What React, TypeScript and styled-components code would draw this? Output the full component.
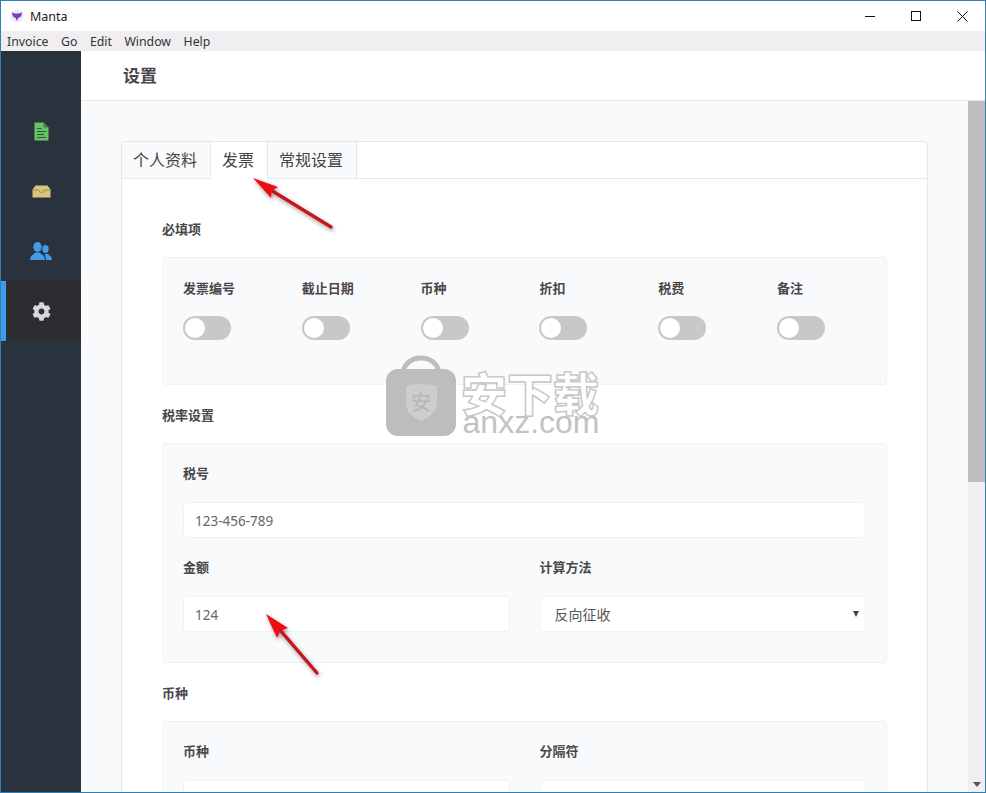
import React from 'react'
import styled, { createGlobalStyle } from 'styled-components'
import { FaCog } from 'react-icons/fa'

const uiFont = `'Noto Sans', 'Noto Sans CJK SC', sans-serif`

const GlobalStyle = createGlobalStyle`
  html, body {
    margin: 0;
    padding: 0;
    height: 100%;
    overflow: hidden;
    background: #fff;
  }
  * {
    box-sizing: border-box;
  }
`

const Window = styled.div`
  position: relative;
  width: 986px;
  height: 793px;
  display: flex;
  flex-direction: column;
  overflow: hidden;
  border: 1px solid #2f7fb5;
  font-family: ${uiFont};
  color: #4a474b;
`

const TitleBar = styled.div`
  height: 30px;
  flex: none;
  display: flex;
  align-items: center;
  padding-left: 9px;
  background: #fff;
  color: #222;
  font-size: 12.5px;
`

const TitleText = styled.span`
  margin-left: 6px;
`

const WindowButtons = styled.div`
  margin-left: auto;
  display: flex;
  height: 100%;
`

const WindowButton = styled.div`
  width: 46px;
  height: 100%;
  display: flex;
  align-items: center;
  justify-content: center;
`

const MenuBar = styled.div`
  height: 20px;
  flex: none;
  display: flex;
  align-items: center;
  gap: 12.5px;
  padding-left: 6px;
  background: #f0eef1;
  color: #333;
  font-size: 12.3px;
`

const Body = styled.div`
  flex: 1;
  display: flex;
  min-height: 0;
`

const Sidebar = styled.nav`
  width: 80px;
  flex: none;
  padding-top: 50px;
  background: #2a323d;
`

const NavItem = styled.div<{ $active?: boolean }>`
  height: 60px;
  display: flex;
  align-items: center;
  justify-content: center;
  background: ${p => (p.$active ? '#2c2d31' : 'transparent')};
  border-left: 5px solid ${p => (p.$active ? '#3f9cea' : 'transparent')};
  padding-right: 5px;
  color: #d8d8da;
  font-size: 19px;
`

const Main = styled.div`
  flex: 1;
  min-width: 0;
  display: flex;
  flex-direction: column;
`

const PageHeader = styled.header`
  height: 50px;
  flex: none;
  display: flex;
  align-items: center;
  padding-left: 42px;
  padding-bottom: 2px;
  background: #fff;
  border-bottom: 1px solid #e6e7ea;
  font-size: 17px;
  font-weight: 700;
`

const ScrollArea = styled.div`
  flex: 1;
  min-height: 0;
  display: flex;
`

const Content = styled.main`
  flex: 1;
  min-width: 0;
  overflow: hidden;
  padding: 40px 40px 0;
  background: #f9fafc;
`

const Scrollbar = styled.div`
  width: 17px;
  flex: none;
  display: flex;
  flex-direction: column;
  background: #f0eef1;
`

const ScrollThumb = styled.div`
  height: 381px;
  background: #bfbdc0;
`

const ScrollArrow = styled.div`
  margin-top: auto;
  height: 16px;
  display: flex;
  align-items: center;
  justify-content: center;
`

const Card = styled.section`
  background: #fff;
  border: 1px solid #e6e7ea;
  border-bottom: none;
  border-radius: 4px 4px 0 0;
`

const Tabs = styled.div`
  height: 37px;
  display: flex;
  border-bottom: 1px solid #e6e7ea;
`

const Tab = styled.div<{ $active?: boolean }>`
  height: 37px;
  padding: 0 13px 2px 11px;
  display: flex;
  align-items: center;
  font-size: 16px;
  color: #444;
  background: ${p => (p.$active ? '#fff' : '#f9fafc')};
  border-right: 1px solid #e6e7ea;
  border-bottom: 1px solid ${p => (p.$active ? '#fff' : '#e6e7ea')};
`

const CardBody = styled.div`
  padding: 42px 40px 0;
`

const SectionTitle = styled.h3`
  margin: 0 0 20px;
  height: 16px;
  font-size: 13px;
  line-height: 16px;
  font-weight: 700;
`

const Panel = styled.div<{ $height: number }>`
  height: ${p => p.$height}px;
  margin-bottom: 22px;
  padding: 21px 20px 0;
  background: #f9fafc;
  border: 1px solid #f1f2f5;
  border-radius: 4px;
`

const ToggleRow = styled.div`
  display: grid;
  grid-template-columns: repeat(6, 118.8px);
`

const ToggleField = styled.div`
  display: flex;
  flex-direction: column;
  align-items: flex-start;
`

const FieldLabel = styled.label`
  display: block;
  height: 18px;
  margin-bottom: 19px;
  font-size: 13px;
  line-height: 18px;
  font-weight: 700;
`

const FormLabel = styled(FieldLabel)`
  margin: -1px 0 20px;
`

const Toggle = styled.span`
  display: block;
  position: relative;
  width: 48px;
  height: 24px;
  border-radius: 12px;
  background: #c9c7ca;
  &::after {
    content: '';
    position: absolute;
    top: 2px;
    left: 2px;
    width: 20px;
    height: 20px;
    border-radius: 50%;
    background: #fff;
  }
`

const FieldRow = styled.div`
  display: grid;
  grid-template-columns: 1fr 1fr;
  column-gap: 30px;
`

const Field = styled.div<{ $wide?: boolean }>`
  grid-column: ${p => (p.$wide ? '1 / -1' : 'auto')};
  margin-bottom: 21px;
`

const TextInput = styled.input`
  display: block;
  width: 100%;
  height: 36px;
  padding: 1px 11px 0;
  background: #fff;
  border: 1px solid #f1f2f5;
  border-radius: 4px;
  outline: none;
  font-family: ${uiFont};
  font-size: 13.5px;
  color: #666;
`

const SelectWrap = styled.div`
  position: relative;
  &::after {
    content: '';
    position: absolute;
    top: 15px;
    right: 7px;
    border-left: 3px solid transparent;
    border-right: 3px solid transparent;
    border-top: 6px solid #444;
  }
`

const Select = styled.select`
  display: block;
  width: 100%;
  height: 36px;
  padding: 0 14px;
  appearance: none;
  background: #fff;
  border: 1px solid #f1f2f5;
  border-radius: 4px;
  outline: none;
  font-family: ${uiFont};
  font-size: 14px;
  color: #555;
`

const Watermark = styled.svg`
  position: absolute;
  left: 383px;
  top: 354px;
  pointer-events: none;
`

const ArrowLayer = styled.svg`
  position: absolute;
  left: 0;
  top: 0;
  pointer-events: none;
`

const MantaLogo = () => (
  <svg width="14" height="14" viewBox="0 0 14 14">
    <circle cx="7" cy="7" r="6.5" fill="#efe9f7" />
    <path d="M1.8 3.2 L4.8 4.4 H9.2 L12.2 3.2 L11 7.4 L8.4 9 L7 12 L5.6 9 L3 7.4 Z" fill="#7a3fc0" />
  </svg>
)

const DocIcon = () => (
  <svg width="15" height="19" viewBox="0 0 15 19">
    <path d="M0.5 0.5 H9.5 L14.5 5.5 V18.5 H0.5 Z" fill="#6abf69" />
    <path d="M9.5 0.5 V5.5 H14.5" fill="#3f7f47" />
    <path d="M3 6.5 H7.5 M3 9.5 H12 M3 12.5 H10 M3 15.5 H12" stroke="#2a5c33" strokeWidth="1" />
  </svg>
)

const InboxIcon = () => (
  <svg width="19" height="13" viewBox="0 0 19 13">
    <path d="M3.5 0.5 H15.5 L18.5 4.5 V12.5 H0.5 V4.5 Z" fill="#d9c67c" />
    <path d="M1 5 H6.5 Q7.3 7.5 9.5 7.5 Q11.7 7.5 12.5 5 H18" fill="none" stroke="#8f8556" strokeWidth="0.9" />
  </svg>
)

const PeopleIcon = () => (
  <svg width="22" height="18" viewBox="0 0 22 18" fill="#469be8">
    <ellipse cx="7.5" cy="5" rx="4.2" ry="5" />
    <path d="M0 18 C0 13.5 3.5 12.5 5.5 10.5 H9.5 C11.5 12.5 15 13.5 15 18 Z" />
    <ellipse cx="15.5" cy="7" rx="3.2" ry="4" />
    <path d="M16 18 H22 C22 14.5 19.5 13.5 18 12 H14.5 C15 13.5 16 15 16 18 Z" />
  </svg>
)

const WatermarkLogo = () => (
  <Watermark width="222" height="84" viewBox="0 0 222 84">
    <path d="M19 18 C21 -2 53 -2 55 18" fill="none" stroke="#bdbdbd" strokeWidth="5" />
    <rect x="2" y="14" width="70" height="67" rx="12" fill="#bdbdbd" />
    <path d="M22 31 Q37 27 53 31 V50 Q51 60 37 66 Q23 60 22 50 Z" fill="#cdcdcd" />
    <text x="37" y="55" textAnchor="middle" fontSize="20" fill="#b5b5b5" fontFamily="'Noto Sans CJK SC', sans-serif">
      安
    </text>
    <text
      x="146"
      y="56"
      textAnchor="middle"
      fontSize="46"
      fontWeight="900"
      fill="#fff"
      stroke="#c6c6c6"
      strokeWidth="1.4"
      fontFamily="'Noto Sans CJK SC', sans-serif"
    >
      安下载
    </text>
    <text x="147" y="78" textAnchor="middle" fontSize="32" fill="#c2c2c2" fontFamily="'Liberation Sans', sans-serif">
      anxz.com
    </text>
  </Watermark>
)

type ArrowProps = {
  tip: [number, number]
  left: [number, number]
  right: [number, number]
  tail: [number, number]
}

const Arrow = ({ tip, left, right, tail }: ArrowProps) => {
  // base of the head sits a little toward the tip, which gives the notch
  const baseX = (left[0] + right[0]) / 2 - (left[0] + right[0] - 2 * tip[0]) * 0.06
  const baseY = (left[1] + right[1]) / 2 - (left[1] + right[1] - 2 * tip[1]) * 0.06
  return (
    <g filter="url(#arrow-shadow)">
      <line x1={baseX} y1={baseY} x2={tail[0]} y2={tail[1]} stroke="#c4161c" strokeWidth="3.4" strokeLinecap="round" />
      <polygon points={`${tip} ${left} ${baseX},${baseY} ${right}`} fill="#ee0f16" />
    </g>
  )
}

const requiredFields = ['发票编号', '截止日期', '币种', '折扣', '税费', '备注']

export default function App() {
  return (
    <>
      <GlobalStyle />
      <Window>
        <TitleBar>
          <MantaLogo />
          <TitleText>Manta</TitleText>
          <WindowButtons>
            <WindowButton>
              <svg width="10" height="10" viewBox="0 0 10 10">
                <path d="M0 5.5 H10" stroke="#111" strokeWidth="1" />
              </svg>
            </WindowButton>
            <WindowButton>
              <svg width="10" height="10" viewBox="0 0 10 10">
                <rect x="0.5" y="0.5" width="9" height="9" fill="none" stroke="#111" strokeWidth="1" />
              </svg>
            </WindowButton>
            <WindowButton>
              <svg width="11" height="11" viewBox="0 0 11 11">
                <path d="M0.5 0.5 L10.5 10.5 M10.5 0.5 L0.5 10.5" stroke="#111" strokeWidth="1" />
              </svg>
            </WindowButton>
          </WindowButtons>
        </TitleBar>
        <MenuBar>
          <span>Invoice</span>
          <span>Go</span>
          <span>Edit</span>
          <span>Window</span>
          <span>Help</span>
        </MenuBar>
        <Body>
          <Sidebar>
            <NavItem>
              <DocIcon />
            </NavItem>
            <NavItem>
              <InboxIcon />
            </NavItem>
            <NavItem>
              <PeopleIcon />
            </NavItem>
            <NavItem $active>
              <FaCog />
            </NavItem>
          </Sidebar>
          <Main>
            <PageHeader>设置</PageHeader>
            <ScrollArea>
              <Content>
                <Card>
                  <Tabs>
                    <Tab>个人资料</Tab>
                    <Tab $active>发票</Tab>
                    <Tab>常规设置</Tab>
                  </Tabs>
                  <CardBody>
                    <SectionTitle>必填项</SectionTitle>
                    <Panel $height={128}>
                      <ToggleRow>
                        {requiredFields.map(name => (
                          <ToggleField key={name}>
                            <FieldLabel>{name}</FieldLabel>
                            <Toggle />
                          </ToggleField>
                        ))}
                      </ToggleRow>
                    </Panel>
                    <SectionTitle>税率设置</SectionTitle>
                    <Panel $height={220}>
                      <FieldRow>
                        <Field $wide>
                          <FormLabel>税号</FormLabel>
                          <TextInput defaultValue="123-456-789" />
                        </Field>
                        <Field>
                          <FormLabel>金额</FormLabel>
                          <TextInput defaultValue="124" />
                        </Field>
                        <Field>
                          <FormLabel>计算方法</FormLabel>
                          <SelectWrap>
                            <Select defaultValue="reverse">
                              <option value="reverse">反向征收</option>
                            </Select>
                          </SelectWrap>
                        </Field>
                      </FieldRow>
                    </Panel>
                    <SectionTitle>币种</SectionTitle>
                    <Panel $height={219}>
                      <FieldRow>
                        <Field>
                          <FormLabel>币种</FormLabel>
                          <TextInput />
                        </Field>
                        <Field>
                          <FormLabel>分隔符</FormLabel>
                          <TextInput />
                        </Field>
                      </FieldRow>
                    </Panel>
                  </CardBody>
                </Card>
              </Content>
              <Scrollbar>
                <ScrollThumb />
                <ScrollArrow>
                  <svg width="8" height="5" viewBox="0 0 8 5">
                    <path d="M0 0 H8 L4 5 Z" fill="#555" />
                  </svg>
                </ScrollArrow>
              </Scrollbar>
            </ScrollArea>
          </Main>
        </Body>
        <WatermarkLogo />
        <ArrowLayer width="984" height="791" viewBox="1 1 984 791">
          <defs>
            <filter id="arrow-shadow" x="-30%" y="-30%" width="170%" height="170%">
              <feDropShadow dx="1" dy="2" stdDeviation="2" floodColor="#000" floodOpacity="0.4" />
            </filter>
          </defs>
          <Arrow tip={[253, 178]} left={[278, 187]} right={[271, 198]} tail={[331, 227]} />
          <Arrow tip={[266, 614]} left={[288, 628]} right={[277, 638]} tail={[317, 673]} />
        </ArrowLayer>
      </Window>
    </>
  )
}
